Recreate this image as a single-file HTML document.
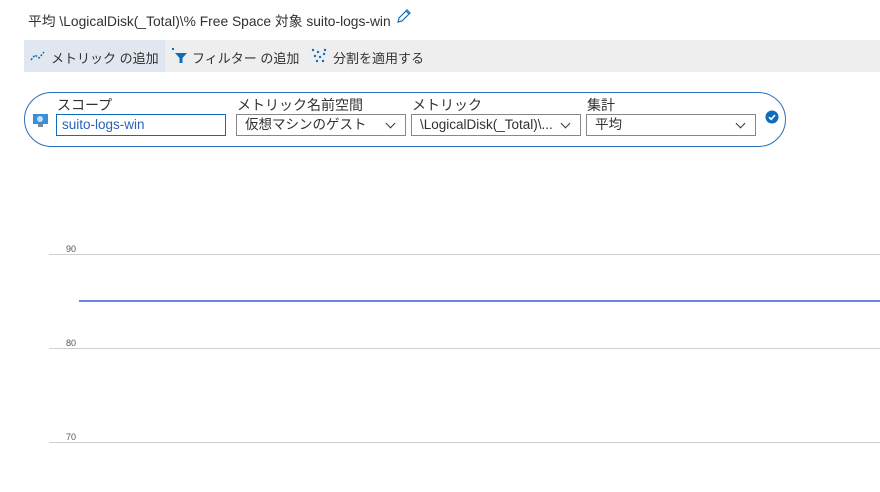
<!DOCTYPE html>
<html><head><style>
body{margin:0;width:880px;height:492px;background:#fff;font-family:"Liberation Sans","Noto Sans CJK JP",sans-serif;color:#323130;position:relative;overflow:hidden}
.a{position:absolute}
.t{font-size:13.5px;white-space:nowrap}
.sel{position:absolute;top:114px;height:22px;border:1px solid #8a8886;box-sizing:border-box;font-size:13.5px;line-height:20px;padding-left:8px;white-space:nowrap;overflow:hidden}
.dd:after{content:"";position:absolute;right:11px;top:5px;width:6px;height:6px;border-right:1.3px solid #333;border-bottom:1.3px solid #333;transform:rotate(45deg)}
.lab{position:absolute;top:95px;font-size:14px}
.g{position:absolute;left:49px;right:0;height:1px;background:#d0d0d0}
.y{position:absolute;left:66px;font-size:9px;color:#555}
</style></head><body>
<div class="a t" style="left:28px;top:10px;font-size:13.8px">平均 \LogicalDisk(_Total)\% Free Space 対象 suito-logs-win</div>
<svg class="a" style="left:395px;top:7px" width="18" height="18" viewBox="0 0 18 18"><path d="M3 15 L4 11 L12 3 L15 6 L7 14 Z M11 4 L14 7" fill="none" stroke="#0f6cbd" stroke-width="1.2"/></svg>
<div class="a" style="left:24px;top:40px;width:856px;height:32px;background:#eeeeee"></div>
<div class="a" style="left:24px;top:40px;width:141px;height:32px;background:#e1e7ee"></div>
<svg class="a" style="left:30px;top:49px" width="16" height="14"><path d="M1 11 L5 6 L9 9 L14 3" fill="none" stroke="#0f6cbd" stroke-width="1.5" stroke-dasharray="2 1.5"/></svg>
<div class="a t" style="left:51px;top:48px;font-size:13px">メトリック の追加</div>
<svg class="a" style="left:170px;top:46px" width="18" height="18"><path d="M2 2h2v2H2z M5 7h12l-4.5 5v5h-3v-5z" fill="#0f6cbd"/></svg>
<div class="a t" style="left:192px;top:48px;font-size:13px">フィルター の追加</div>
<svg class="a" style="left:311px;top:48px" width="16" height="16"><g fill="#0f6cbd"><circle cx="2" cy="2" r="1.2"/><circle cx="7" cy="4" r="1.2"/><circle cx="4" cy="8" r="1.2"/><circle cx="9" cy="9" r="1.2"/><circle cx="13" cy="6" r="1.2"/><circle cx="6" cy="13" r="1.2"/><circle cx="12" cy="13" r="1.2"/><circle cx="14" cy="2" r="1.2"/></g></svg>
<div class="a t" style="left:333px;top:48px;font-size:13px">分割を適用する</div>
<div class="a" style="left:24px;top:92px;width:762px;height:55px;border:1px solid #2a6fb8;border-radius:28px;box-sizing:border-box"></div>
<svg class="a" style="left:32px;top:112px" width="18" height="18"><rect x="1" y="2" width="15" height="10" fill="#3a8fd9"/><circle cx="8" cy="7" r="3" fill="#bfe3fb"/><rect x="6" y="12" width="5" height="3" fill="#7a8a99"/></svg>
<div class="lab" style="left:57px">スコープ</div>
<div class="sel" style="left:56px;width:170px;border-color:#0f6cbd;color:#2a62b8;padding-left:5px">suito-logs-win</div>
<div class="lab" style="left:237px">メトリック名前空間</div>
<div class="sel dd" style="left:236px;width:170px">仮想マシンのゲスト</div>
<div class="lab" style="left:412px">メトリック</div>
<div class="sel dd" style="left:411px;width:170px">\LogicalDisk(_Total)\...</div>
<div class="lab" style="left:587px">集計</div>
<div class="sel dd" style="left:586px;width:170px">平均</div>
<svg class="a" style="left:765px;top:110px" width="14" height="14"><circle cx="7" cy="7" r="6.5" fill="#0f6cbd"/><path d="M4 7.2 L6.2 9.3 L10 5" stroke="#fff" stroke-width="1.6" fill="none"/></svg>
<div class="y" style="top:244px">90</div><div class="g" style="top:254px"></div>
<div class="y" style="top:338px">80</div><div class="g" style="top:348px"></div>
<div class="y" style="top:432px">70</div><div class="g" style="top:442px"></div>
<div class="a" style="left:79px;right:0;top:300px;height:2px;background:#6b85e3"></div>
</body></html>
